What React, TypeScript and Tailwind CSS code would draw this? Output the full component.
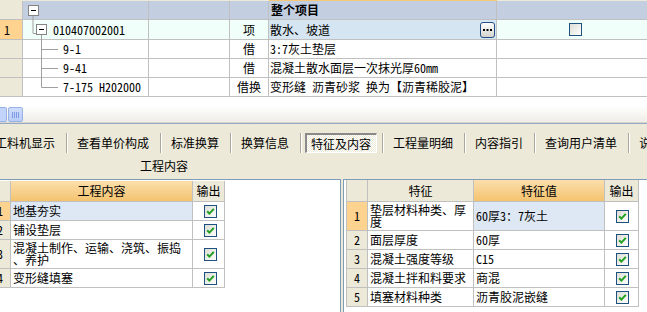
import React from "react";

const FONT = "[font-family:Noto_Sans_Mono_CJK_SC,Noto_Sans_CJK_SC,monospace]";

function CheckBox({ checked = true }: { checked?: boolean }) {
  return (
    <svg width="13" height="13" viewBox="0 0 13 13" className="block shrink-0">
      <defs>
        <linearGradient id="cbg" x1="0" y1="0" x2="1" y2="1">
          <stop offset="0" stopColor="#DCDCD4" />
          <stop offset="1" stopColor="#FFFFFF" />
        </linearGradient>
      </defs>
      <rect x="0.5" y="0.5" width="12" height="12" fill="url(#cbg)" stroke="#1C5180" />
      {checked && (
        <path d="M3.2 6.2 L5.4 8.6 L9.8 3.9" fill="none" stroke="#21A121" strokeWidth="2" />
      )}
    </svg>
  );
}

function DotsButton() {
  return (
    <div className="w-[15px] h-[16px] shrink-0 rounded-[3px] border border-[#24508A] bg-linear-to-b from-white to-[#D4D4CC] flex items-center justify-center">
      <svg width="11" height="2" viewBox="0 0 11 2" className="block">
        <rect x="1" y="0" width="2" height="2" fill="#000" />
        <rect x="4.5" y="0" width="2" height="2" fill="#000" />
        <rect x="8" y="0" width="2" height="2" fill="#000" />
      </svg>
    </div>
  );
}

function TreeLines() {
  return (
    <svg
      width="126"
      height="97"
      viewBox="0 0 126 97"
      className="absolute left-[23px] top-0 pointer-events-none"
    >
      <g stroke="#A0A0A0" strokeWidth="1" fill="none">
        <line x1="10" y1="16" x2="10" y2="33.5" />
        <line x1="10" y1="33.5" x2="13" y2="33.5" />
        <line x1="18.5" y1="35" x2="18.5" y2="87.5" />
        <line x1="18.5" y1="49.5" x2="35" y2="49.5" />
        <line x1="18.5" y1="68.5" x2="35" y2="68.5" />
        <line x1="18.5" y1="87.5" x2="35" y2="87.5" />
      </g>
      <rect x="5.5" y="5.5" width="10" height="10" fill="#fff" stroke="#848484" />
      <line x1="8" y1="10.5" x2="13" y2="10.5" stroke="#000" />
      <rect x="13.5" y="24.5" width="10" height="10" fill="#fff" stroke="#848484" />
      <line x1="16" y1="29.5" x2="21" y2="29.5" stroke="#000" />
    </svg>
  );
}

function TopGrid() {
  const A = "w-[23px] shrink-0 border-r border-[#C0C0C0] bg-[#ECE9D8]";
  const B = "w-[126px] shrink-0 border-r border-[#C0C0C0] flex items-center";
  const C = "w-[81px] shrink-0 border-r border-[#C0C0C0]";
  const D = "w-[39px] shrink-0 border-r border-[#C0C0C0] flex items-center justify-center";
  const E = "w-[228px] shrink-0 border-r border-[#C0C0C0] flex items-center";
  const F = "flex-1 flex items-center justify-center";
  const subRows = [
    { code: "9-1", type: "借", name: "3:7灰土垫层" },
    { code: "9-41", type: "借", name: "混凝土散水面层一次抹光厚60mm" },
    { code: "7-175 H202000", type: "借换", name: "变形缝 沥青砂浆 换为【沥青稀胶泥】" },
  ];
  return (
    <div className="relative bg-white">
      <div className="flex h-[1px]">
        <div className="w-[269px] bg-[#ECE9D8]" />
        <div className="w-[228px] bg-[#F6C777]" />
        <div className="flex-1 bg-[#ECE9D8]" />
      </div>
      <div className="flex h-[19px] border-b border-[#C0C0C0] bg-[#C3CFE0]">
        <div className={A} />
        <div className={B} />
        <div className={C} />
        <div className={D} />
        <div className={`${E} pl-[2px] font-bold`}>整个项目</div>
        <div className={F} />
      </div>
      <div className="flex h-[20px] border-b border-[#C0C0C0] bg-[#F0FFF9]">
        <div className="w-[23px] shrink-0 border-r border-[#C0C0C0] bg-[#FDD38F] flex items-center pl-[4px]">1</div>
        <div className={`${B} pl-[30px]`}>010407002001</div>
        <div className={C} />
        <div className={D}>项</div>
        <div className={`${E} pl-[1px] pr-[1px] justify-between bg-[#D5E5F1]`}>
          <span>散水、坡道</span>
          <DotsButton />
        </div>
        <div className={`${F} pl-[7px]`}>
          <CheckBox checked={false} />
        </div>
      </div>
      {subRows.map((r) => (
        <div key={r.code} className="flex h-[19px] border-b border-[#C0C0C0]">
          <div className={A} />
          <div className={`${B} pl-[40px] whitespace-nowrap`}>{r.code}</div>
          <div className={C} />
          <div className={D}>{r.type}</div>
          <div className={`${E} pl-[1px] whitespace-nowrap`}>{r.name}</div>
          <div className={F} />
        </div>
      ))}
      <TreeLines />
    </div>
  );
}

function ScrollBar() {
  return (
    <div className="h-[17px] border-b border-[#D8D5CC] bg-linear-to-b from-white to-[#EEEDE6] flex items-start pt-[1px]">
      <div className="w-[7px] h-[15px] shrink-0 rounded-r-[2px] border border-l-0 border-[#98B2E8] bg-[#C3D4FC]" />
      <div className="ml-[1px] w-[15px] h-[15px] shrink-0 rounded-[2px] border border-[#98B2E8] bg-linear-to-b from-[#CFDDFD] to-[#B8CCF8] flex items-center justify-center">
        <svg width="7" height="6" viewBox="0 0 7 6" className="block">
          <g stroke="#7D9BE0" strokeWidth="1">
            <line x1="0.5" y1="0" x2="0.5" y2="6" />
            <line x1="2.5" y1="0" x2="2.5" y2="6" />
            <line x1="4.5" y1="0" x2="4.5" y2="6" />
            <line x1="6.5" y1="0" x2="6.5" y2="6" />
          </g>
        </svg>
      </div>
    </div>
  );
}

function Toolbar() {
  const tabs = [
    "工料机显示",
    "查看单价构成",
    "标准换算",
    "换算信息",
    "特征及内容",
    "工程量明细",
    "内容指引",
    "查询用户清单",
    "说明信息",
  ];
  return (
    <div className="h-[56px] border-t border-[#93A9C4] pt-[9px] overflow-hidden">
      <div className="flex items-center h-[20px] -ml-[11px] whitespace-nowrap">
        {tabs.map((t, i) => (
          <React.Fragment key={t}>
            {i > 0 && (
              <div className="ml-[5px] mr-[3px] h-[20px] w-[2px] shrink-0 border-l border-r border-l-[#ACA899] border-r-white" />
            )}
            {t === "特征及内容" ? (
              <div className="h-[20px] shrink-0 flex items-center pl-[4px] pr-[5px] border-t-2 border-l-2 border-b border-r border-t-[#8A8A8A] border-l-[#8A8A8A] border-b-white border-r-white bg-[repeating-conic-gradient(#FFFFFF_0_25%,#ECE9D8_0_50%)] bg-[length:2px_2px]">
                {t}
              </div>
            ) : (
              <div className="h-[20px] shrink-0 flex items-center px-[6px]">{t}</div>
            )}
          </React.Fragment>
        ))}
      </div>
      <div className="mt-[3px] h-[20px] flex items-center">
        <div className="ml-[134px] px-[6px]">工程内容</div>
      </div>
    </div>
  );
}

function LeftTable() {
  const rows = [
    { n: "1", t: ["地基夯实"], h: "h-[19px]", sel: true },
    { n: "2", t: ["铺设垫层"], h: "h-[19px]", sel: false },
    { n: "3", t: ["混凝土制作、运输、浇筑、振捣", "、养护"], h: "h-[29px]", sel: false },
    { n: "4", t: ["变形缝填塞"], h: "h-[19px]", sel: false },
  ];
  return (
    <div className="w-[225px]">
      <div className="flex h-[21px] border-b border-[#C0C0C0]">
        <div className="w-[11px] shrink-0 border-r border-[#C0C0C0] bg-[#ECE9D8]" />
        <div className="w-[182px] shrink-0 border-r border-[#C0C0C0] bg-linear-to-b from-[#FBDFAB] to-[#F4C36F] flex items-center justify-center">
          工程内容
        </div>
        <div className="w-[32px] shrink-0 border-r border-[#C0C0C0] bg-[#ECE9D8] flex items-center justify-center">
          输出
        </div>
      </div>
      {rows.map((r) => (
        <div key={r.n} className={`flex ${r.h} border-b border-[#C0C0C0]`}>
          <div
            className={`w-[11px] shrink-0 overflow-hidden border-r border-[#C0C0C0] flex items-center ${
              r.sel ? "bg-[#FDD38F]" : "bg-[#ECE9D8]"
            }`}
          >
            <div className="w-[22px] shrink-0 -ml-[11px] text-center">{r.n}</div>
          </div>
          <div
            className={`w-[182px] shrink-0 border-r border-[#C0C0C0] pl-[2px] flex flex-col justify-center whitespace-nowrap ${
              r.sel ? "bg-[#DEE8F4]" : ""
            }`}
          >
            {r.t.map((l) => (
              <div key={l}>{l}</div>
            ))}
          </div>
          <div className="w-[32px] shrink-0 border-r border-[#C0C0C0] flex items-center justify-center pl-[3px]">
            <CheckBox />
          </div>
        </div>
      ))}
    </div>
  );
}

function RightTable() {
  const rows = [
    { n: "1", k: ["垫层材料种类、厚", "度"], v: "60厚3：7灰土", h: "h-[29px]", sel: true },
    { n: "2", k: ["面层厚度"], v: "60厚", h: "h-[19px]", sel: false },
    { n: "3", k: ["混凝土强度等级"], v: "C15", h: "h-[19px]", sel: false },
    { n: "4", k: ["混凝土拌和料要求"], v: "商混", h: "h-[19px]", sel: false },
    { n: "5", k: ["填塞材料种类"], v: "沥青胶泥嵌缝", h: "h-[19px]", sel: false },
  ];
  return (
    <div className="w-[293px] border-l border-[#C0C0C0]">
      <div className="flex h-[22px] border-b border-[#C0C0C0]">
        <div className="w-[21px] shrink-0 border-r border-[#C0C0C0] bg-[#ECE9D8]" />
        <div className="w-[106px] shrink-0 border-r border-[#C0C0C0] bg-[#ECE9D8] flex items-center justify-center">
          特征
        </div>
        <div className="w-[131px] shrink-0 border-r border-[#C0C0C0] bg-linear-to-b from-[#FBDFAB] to-[#F4C36F] flex items-center justify-center">
          特征值
        </div>
        <div className="w-[34px] shrink-0 border-r border-[#C0C0C0] bg-[#ECE9D8] flex items-center justify-center">
          输出
        </div>
      </div>
      {rows.map((r) => (
        <div key={r.n} className={`flex ${r.h} border-b border-[#C0C0C0]`}>
          <div
            className={`w-[21px] shrink-0 border-r border-[#C0C0C0] flex items-center justify-center ${
              r.sel ? "bg-[#FDD38F]" : "bg-[#ECE9D8]"
            }`}
          >
            {r.n}
          </div>
          <div className="w-[106px] shrink-0 border-r border-[#C0C0C0] pl-[2px] flex flex-col justify-center whitespace-nowrap">
            {r.k.map((l) => (
              <div key={l}>{l}</div>
            ))}
          </div>
          <div
            className={`w-[131px] shrink-0 border-r border-[#C0C0C0] pl-[2px] flex items-center whitespace-nowrap ${
              r.sel ? "bg-[#DEE8F4]" : ""
            }`}
          >
            {r.v}
          </div>
          <div className="w-[34px] shrink-0 border-r border-[#C0C0C0] flex items-center justify-center pl-[2px]">
            <CheckBox />
          </div>
        </div>
      ))}
    </div>
  );
}

export default function App() {
  return (
    <div
      className={`w-[647px] h-[312px] overflow-hidden bg-[#ECE9D8] text-[12px] leading-[12px] text-black ${FONT}`}
    >
      <TopGrid />
      <div className="h-[9px] bg-white" />
      <ScrollBar />
      <Toolbar />
      <div className="flex h-[133px]">
        <div className="w-[341px] shrink-0 border-t border-r border-[#7F9DB9] bg-white pt-[1px]">
          <LeftTable />
        </div>
        <div className="flex-1 ml-[2px] border-t border-l border-[#7F9DB9] bg-white pl-[2px]">
          <RightTable />
        </div>
      </div>
    </div>
  );
}
